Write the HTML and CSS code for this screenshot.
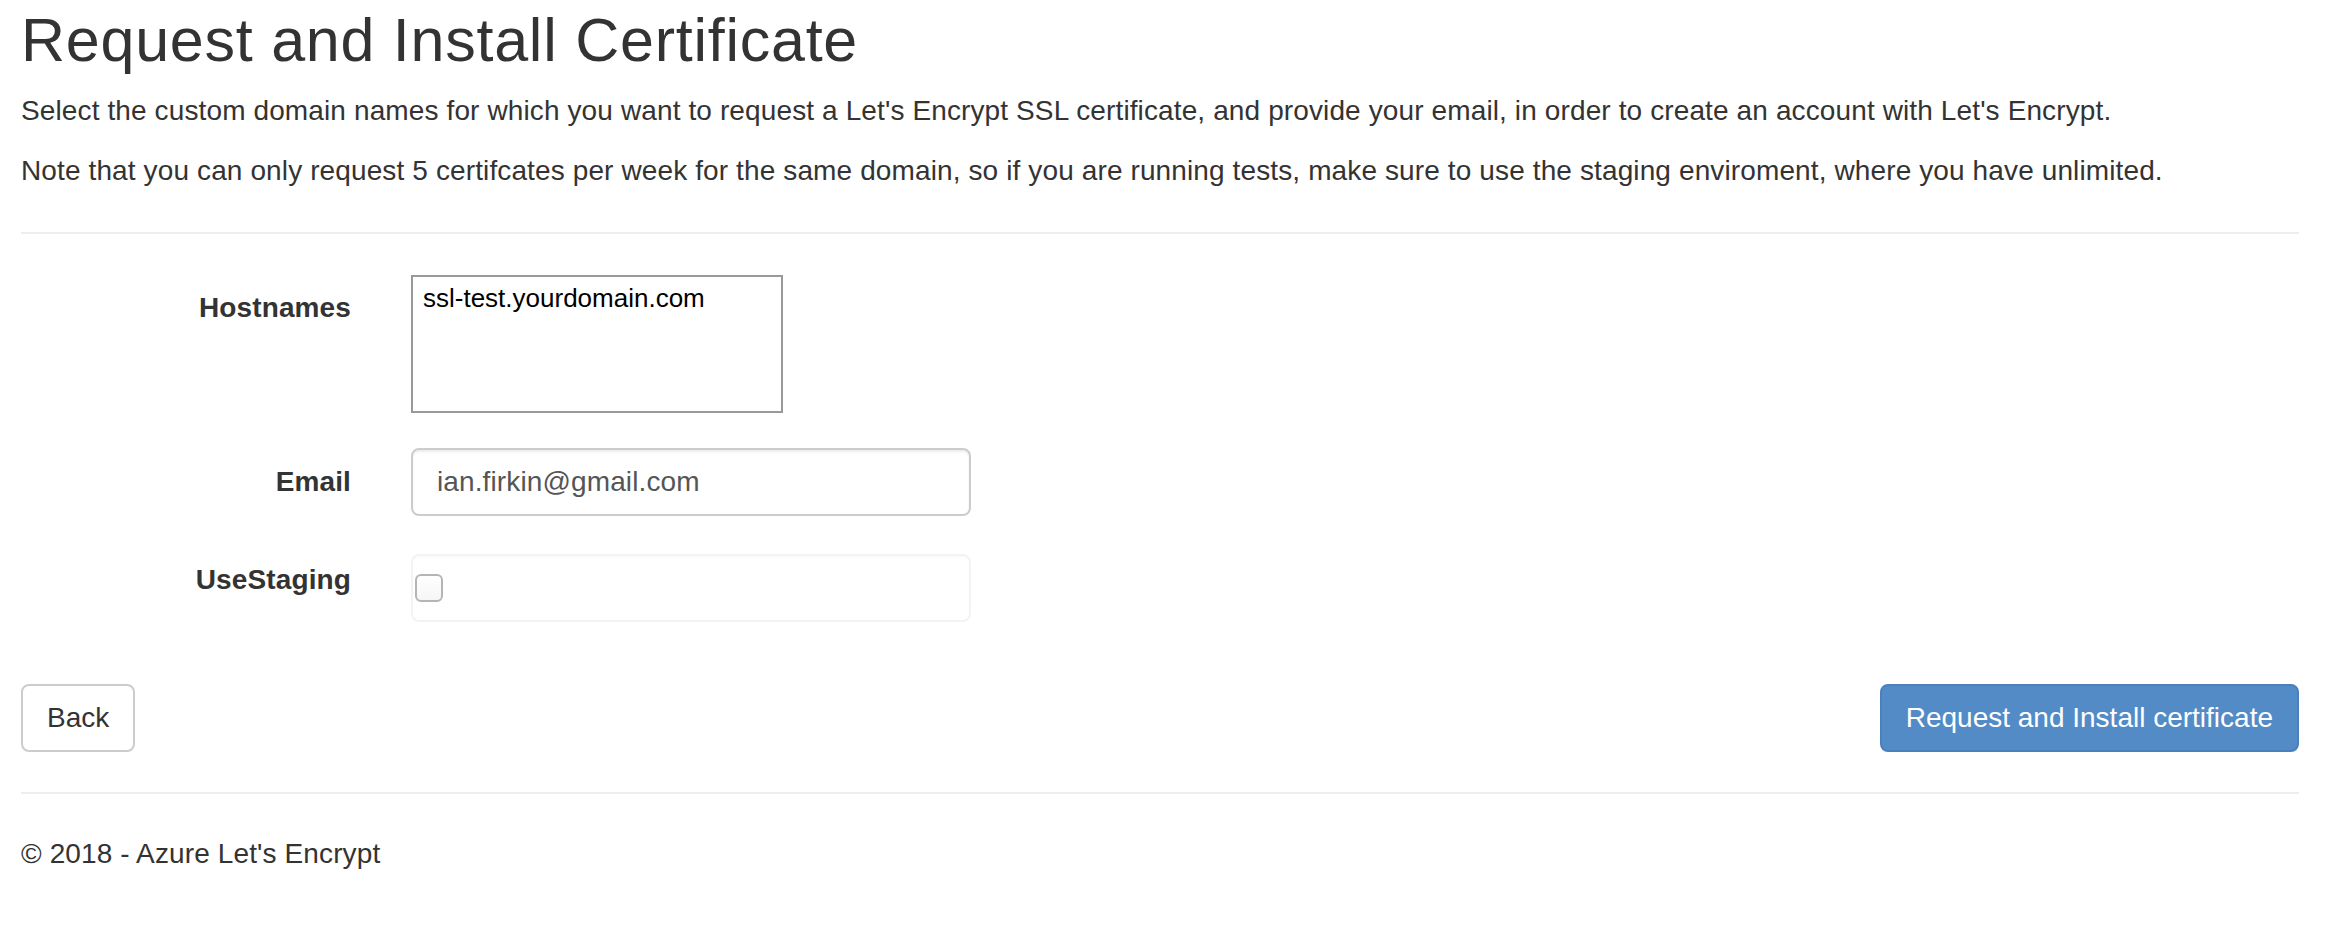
FILE: index.html
```html
<!DOCTYPE html>
<html lang="en">
<head>
<meta charset="utf-8">
<title>Request and Install Certificate</title>
<link rel="stylesheet" href="styles.css">
</head>
<body>
<div class="container">
  <h2 class="title">Request and Install Certificate</h2>
  <p>Select the custom domain names for which you want to request a Let's Encrypt SSL certificate, and provide your email, in order to create an account with Let's Encrypt.</p>
  <p>Note that you can only request 5 certifcates per week for the same domain, so if you are running tests, make sure to use the staging enviroment, where you have unlimited.</p>
  <hr class="rule rule-top">
  <form class="form">
    <div class="form-group">
      <label class="control-label">Hostnames</label>
      <div class="control">
        <div class="textarea" role="textbox">ssl-test.yourdomain.com</div>
      </div>
    </div>
    <div class="form-group">
      <label class="control-label">Email</label>
      <div class="control">
        <div class="form-control" role="textbox">ian.firkin@gmail.com</div>
      </div>
    </div>
    <div class="form-group">
      <label class="control-label">UseStaging</label>
      <div class="control">
        <div class="form-control check-box"><span class="checkbox" role="checkbox" aria-checked="false"></span></div>
      </div>
    </div>
    <div class="actions">
      <a class="btn btn-default">Back</a>
      <button type="button" class="btn btn-primary">Request and Install certificate</button>
    </div>
  </form>
  <hr class="rule rule-bottom">
  <footer class="footer">
    <p>&copy; 2018 - Azure Let's Encrypt</p>
  </footer>
</div>
</body>
</html>
```

FILE: styles.css
```css
html, body {
  margin: 0;
  padding: 0;
  background: #fff;
}

body {
  font-family: "Liberation Sans", Arial, Helvetica, sans-serif;
  font-size: 28px;
  line-height: 40px;
  color: #333;
  letter-spacing: 0.12px;
}

.container {
  padding: 7px 37px 0 21px;
}

.title {
  font-size: 61px;
  line-height: 66px;
  font-weight: 400;
  letter-spacing: 0.75px;
  margin: 0 0 18px;
  color: #333;
}

p {
  margin: 0 0 20px;
}

.rule {
  border: 0;
  border-top: 2px solid #eee;
  height: 0;
  margin: 41px 0 40px;
}

.rule-bottom {
  margin: 40px 0 40px;
}

.form {
  margin: 0;
}

.form-group {
  display: grid;
  grid-template-columns: 330px 1fr;
  column-gap: 60px;
  margin-bottom: 30px;
}

.control-label {
  text-align: right;
  font-weight: 700;
  padding-top: 14px;
}

.textarea {
  box-sizing: border-box;
  width: 372px;
  height: 138px;
  margin: 1px 0 5px;
  border: 2px solid #999;
  padding: 6px 10px;
  font-size: 26px;
  line-height: 30px;
  letter-spacing: 0;
  color: #000;
  background: #fff;
}

.form-control {
  box-sizing: border-box;
  width: 560px;
  height: 68px;
  padding: 12px 24px;
  border: 2px solid #ccc;
  border-radius: 8px;
  box-shadow: inset 0 2px 2px rgba(0, 0, 0, 0.075);
  color: #555;
  background: #fff;
}

.check-box {
  margin-top: 8px;
  border-color: #f3f3f3;
  box-shadow: inset 0 2px 2px rgba(0, 0, 0, 0.02);
  padding: 0 2px;
  display: flex;
  align-items: center;
}

.checkbox {
  box-sizing: border-box;
  width: 28px;
  height: 28px;
  border: 2px solid #b5b5b5;
  border-radius: 6px;
  background: linear-gradient(#fff, #f6f6f6);
}

.actions {
  display: flex;
  justify-content: space-between;
  align-items: flex-start;
  margin-top: 62px;
}

.btn {
  box-sizing: border-box;
  display: inline-block;
  height: 68px;
  padding: 12px 24px;
  border: 2px solid transparent;
  border-radius: 8px;
  font-family: inherit;
  font-size: 28px;
  line-height: 40px;
  letter-spacing: 0;
  white-space: nowrap;
  cursor: pointer;
  text-decoration: none;
}

.btn-default {
  color: #333;
  background: #fff;
  border-color: #ccc;
}

.btn-primary {
  color: #fff;
  background: #528bc6;
  border-color: #4a80bb;
}

.footer p {
  margin: 0 0 20px;
}
```
